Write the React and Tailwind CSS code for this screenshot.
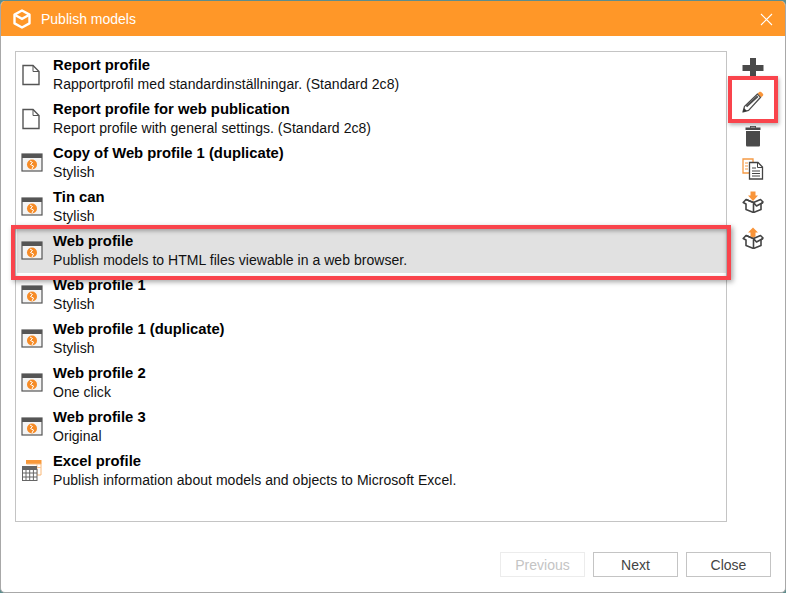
const rows = [
  ["doc", "Report profile", "Rapportprofil med standardinställningar. (Standard 2c8)"],
  ["doc", "Report profile for web publication", "Report profile with general settings. (Standard 2c8)"],
  ["web", "Copy of Web profile 1 (duplicate)", "Stylish"],
  ["web", "Tin can", "Stylish"],
  ["web", "Web profile", "Publish models to HTML files viewable in a web browser.", true],
  ["web", "Web profile 1", "Stylish"],
  ["web", "Web profile 1 (duplicate)", "Stylish"],
  ["web", "Web profile 2", "One click"],
  ["web", "Web profile 3", "Original"],
  ["xls", "Excel profile", "Publish information about models and objects to Microsoft Excel."],
];

function DocIcon() {
  return (
    <svg width="20" height="24" viewBox="0 0 20 24" fill="none">
      <path d="M2 2.5H12L18 8.5V21.5H2Z" fill="#fff" stroke="#555" strokeWidth="1.4" />
      <path d="M12 2.5V8.5H18" stroke="#555" strokeWidth="1" />
    </svg>
  );
}

function WebIcon() {
  return (
    <svg width="22" height="20" viewBox="0 0 22 20" fill="none">
      <rect x="1" y="1" width="20" height="17" fill="#f4f4f4" stroke="#555" strokeWidth="1.2" />
      <rect x="1" y="1" width="20" height="4" fill="#555" />
      <circle cx="11" cy="11.5" r="5" fill="#f68b26" />
      <path d="M9 8L11.5 9.5L9.5 11.5L12.5 13L11 16" stroke="#fff" strokeWidth="1" />
    </svg>
  );
}

function XlsIcon() {
  return (
    <svg width="22" height="24" viewBox="0 0 22 24" fill="none">
      <rect x="5" y="1" width="15.5" height="4" fill="#f9993a" />
      <path d="M5.5 5H20V16H16" stroke="#f9b878" strokeWidth="1" />
      <path d="M12 8.5H20M16 5V16" stroke="#f9c796" strokeWidth="1" />
      <rect x="1" y="7" width="15" height="4" fill="#666" />
      <rect x="1.5" y="10.5" width="14.5" height="11" fill="#fff" stroke="#666" strokeWidth="1" />
      <path d="M1.5 14H16M1.5 18H16M5 10.5V21.5M8.7 10.5V21.5M12.4 10.5V21.5" stroke="#666" strokeWidth="1" />
    </svg>
  );
}

function Row({ type, title, sub, active }) {
  return (
    <div className={`flex h-11 items-center pl-[4px] ${active ? "bg-[#e1e1e1]" : ""}`}>
      <div className="flex w-[32px] shrink-0 items-center justify-start">
        {type === "doc" && <DocIcon />}
        {type === "web" && <WebIcon />}
        {type === "xls" && <XlsIcon />}
      </div>
      <div className="text-[14px] leading-[19px] text-black">
        <div className="text-[14.8px] font-bold">{title}</div>
        <div className="tracking-[0.04px] text-[#111]">{sub}</div>
      </div>
    </div>
  );
}

function Logo() {
  return (
    <svg width="20" height="20" viewBox="0 0 20 20" fill="none" stroke="#fff">
      <path d="M10 1.5L17.5 5.6V14.4L10 18.5L2.5 14.4V5.6Z" strokeWidth="2.4" strokeLinejoin="round" />
      <path d="M3.5 6.2L10 9.8L16.5 6.2" strokeWidth="2.4" />
    </svg>
  );
}

function Plus() {
  return (
    <svg width="24" height="24" viewBox="0 0 24 24">
      <path d="M9 2H15V9H22.5V15H15V22H9V15H1.5V9H9Z" fill="#4a4a4a" />
    </svg>
  );
}

function Pencil() {
  return (
    <svg width="22" height="22" viewBox="0 0 22 22" fill="none">
      <path d="M1 21L2.5 15.4L15.5 3L18.6 6.2L6.6 19.4Z" fill="#fff" stroke="#4d4d4d" strokeWidth="1.3" strokeLinejoin="round" />
      <path d="M4.4 15.6L15.8 5.2" stroke="#4d4d4d" strokeWidth="2" />
      <path d="M1 21L2 17L5 20Z" fill="#333" />
      <path d="M15.7 2.4L17.2 1C17.8 .5 18.6 .5 19.2 1L20.9 2.7C21.4 3.3 21.4 4.1 20.9 4.7L19.4 6.3Z" fill="#f9953a" />
    </svg>
  );
}

function Trash() {
  return (
    <svg width="18" height="22" viewBox="0 0 18 22">
      <path d="M6 1H12V2.5H16.5V5H1.5V2.5H6Z" fill="#4a4a4a" />
      <path d="M6.8 1.8H11.2V2.8H6.8Z" fill="#aaa" />
      <path d="M2 6H16V20C16 21 15.5 21.5 14.5 21.5H3.5C2.5 21.5 2 21 2 20Z" fill="#4a4a4a" />
    </svg>
  );
}

function Copy() {
  return (
    <svg width="22" height="22" viewBox="0 0 22 22" fill="none">
      <path d="M1 1H11V15H1Z" fill="#fff" stroke="#f59a45" strokeWidth="1.3" />
      <path d="M3 5H6M3 8H6M3 11H6" stroke="#f59a45" strokeWidth="1.2" />
      <path d="M7.5 4.5H16L20.5 9V21H7.5Z" fill="#fff" stroke="#444" strokeWidth="1.3" />
      <path d="M15.5 4.5V9.5H20.5" stroke="#444" strokeWidth="1" />
      <path d="M10 10H14M10 13H18M10 15.5H18M10 18H18" stroke="#444" strokeWidth="1.2" />
    </svg>
  );
}

function Box({ up }) {
  return (
    <svg width="22" height="22" viewBox="0 0 22 22" fill="none">
      <path d="M4 8.5L1.2 11.5L4 13V18.5L11.5 21.5L19 18.5V13L21 11L18.5 8.5L11.5 11.5Z" fill="#fff" stroke="#444" strokeWidth="1.6" strokeLinejoin="round" />
      <path d="M4 8.5L11.5 11.5V21.5M11.5 11.5L14.5 15L21 11.5" stroke="#444" strokeWidth="1.6" strokeLinejoin="round" />
      {up ? (
        <path d="M11 .5L16 5.5H13.5V9.5L11 10.5L8.5 9.5V5.5H6Z" fill="#f9953a" />
      ) : (
        <path d="M8.5 .5H13.5V4.5H16L11 10L6 4.5H8.5Z" fill="#f9953a" />
      )}
    </svg>
  );
}

function Btn({ children, disabled }) {
  return (
    <button className={`h-[25px] w-[85px] border bg-white pt-px text-[14px] ${disabled ? "border-[#ececec] text-[#c4c4c4]" : "border-[#c4c4c4] text-[#444]"}`}>
      {children}
    </button>
  );
}

export default function App() {
  return (
    <div className="h-[593px] w-[786px] overflow-hidden bg-[#5d8d8d] pt-px font-['Liberation_Sans',Arial,sans-serif]">
      <div className="relative flex h-[592px] w-[786px] flex-col overflow-hidden rounded-[5px] border-x border-b border-[#a8a8a8] bg-white">
        <div className="flex h-[35px] shrink-0 items-center bg-[#ff9728] pl-[11px] pr-[12px] pt-px text-white">
          <Logo />
          <span className="ml-[9px] text-[14px]">Publish models</span>
          <svg className="ml-auto" width="13" height="13" viewBox="0 0 13 13" stroke="#fff" strokeWidth="1.1">
            <path d="M1 1L12 12M12 1L1 12" />
          </svg>
        </div>

        <div className="flex pl-[14px] pt-[15px]">
          <div className="h-[471px] w-[712px] shrink-0 border border-[#c4c4c4] bg-white pt-px pl-px">
            <div className="w-[709px]">
              {rows.map(([type, title, sub, active]) => (
                <Row key={title} type={type} title={title} sub={sub} active={active} />
              ))}
            </div>
          </div>
          <div className="ml-[14px] flex w-[24px] flex-col items-center">
            <div className="mt-[5px] flex h-6 items-center justify-center"><Plus /></div>
            <div className="mt-[10px] flex h-[24px] items-center justify-center"><Pencil /></div>
            <div className="mt-[10px] flex h-[24px] items-center justify-center"><Trash /></div>
            <div className="mt-[9px] flex h-[24px] items-center justify-center"><Copy /></div>
            <div className="mt-[9px] flex h-[24px] items-center justify-center"><Box /></div>
            <div className="mt-[12px] flex h-[24px] items-center justify-center"><Box up /></div>
          </div>
        </div>

        <div className="mt-[30px] flex justify-end gap-2 pr-[14px]">
          <Btn disabled>Previous</Btn>
          <Btn>Next</Btn>
          <Btn>Close</Btn>
        </div>

        <div className="absolute left-[10px] top-[224px] h-[55px] w-[720px] border-4 border-[#f9444c] shadow-[2px_2px_5px_rgba(0,0,0,0.35),inset_0_2px_4px_rgba(0,0,0,0.3)]" />
        <div className="absolute left-[727px] top-[75px] h-[47px] w-[50px] border-4 border-[#f9444c] shadow-[1px_2px_4px_rgba(0,0,0,0.3)]" />
      </div>
    </div>
  );
}
